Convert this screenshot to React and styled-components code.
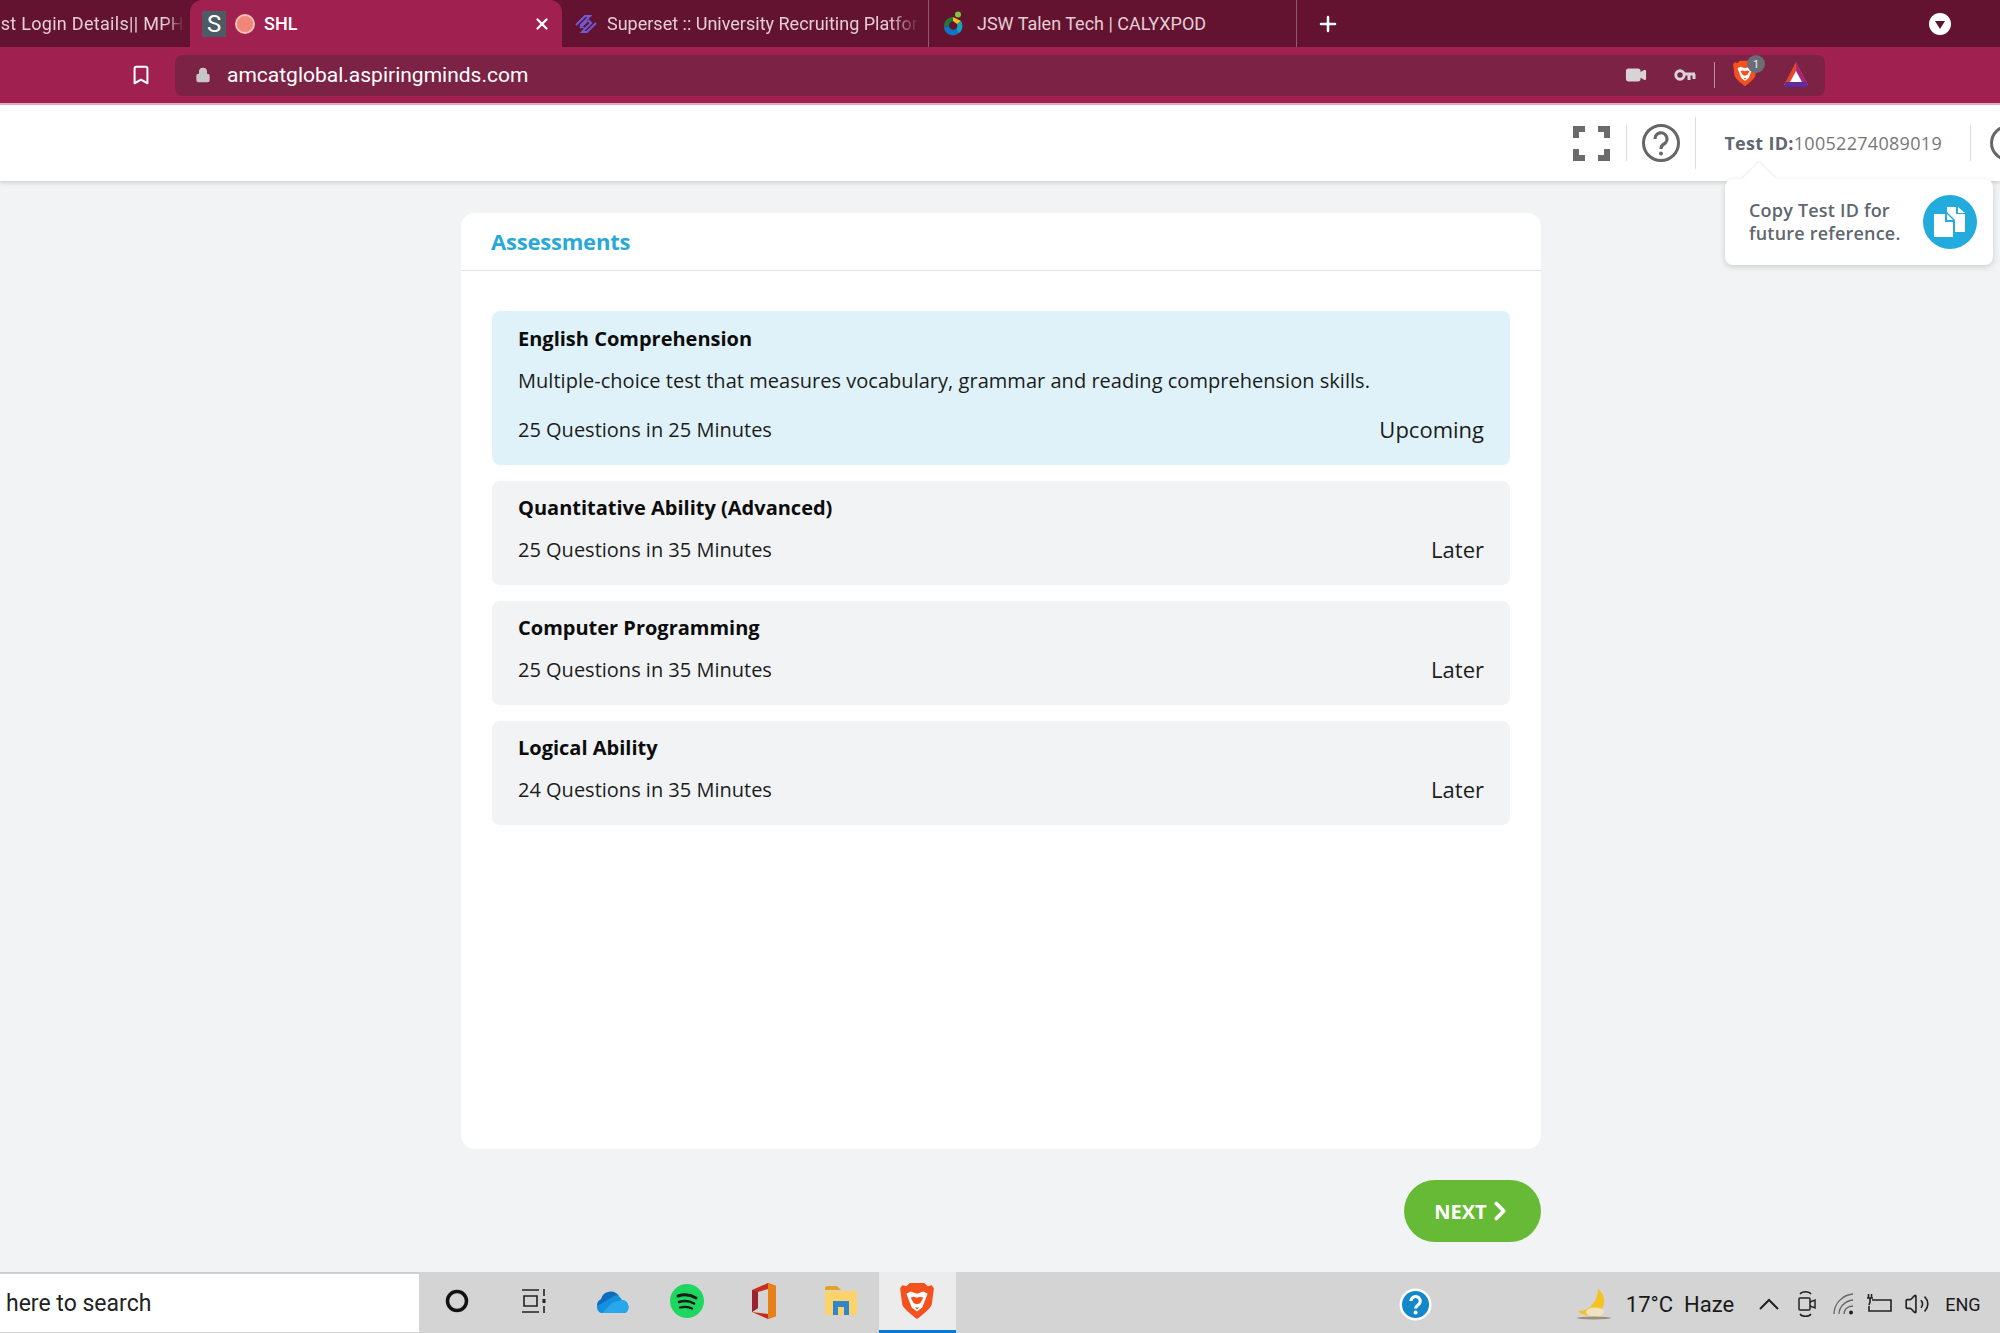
import React from 'react';
import styled, { createGlobalStyle } from 'styled-components';
import { Bookmark, Lock, Video, X, Plus, ChevronRight, Volume2 } from 'lucide-react';

const GlobalStyle = createGlobalStyle`
  html, body { margin: 0; padding: 0; background: #f1f3f5; }
  * { box-sizing: border-box; }
`;

const Page = styled.div`
  width: 2000px;
  height: 1333px;
  display: flex;
  flex-direction: column;
  overflow: hidden;
  font-family: "Open Sans", sans-serif;
  position: relative;
`;

/* browser chrome */
const TabStrip = styled.div`
  height: 47px;
  background: #63132f;
  display: flex;
  align-items: stretch;
  font-family: Roboto, "Liberation Sans", sans-serif;
  font-size: 18px;
`;

const Tab = styled.div`
  width: ${({ $w }) => $w}px;
  flex: none;
  display: flex;
  align-items: center;
  gap: ${({ $gap }) => $gap || 9}px;
  padding: 0 ${({ $right }) => $right || 0}px 0 ${({ $left }) => $left || 0}px;
  color: ${({ $active }) => ($active ? '#fff' : '#e3cdd6')};
  background: ${({ $active }) => ($active ? '#a0204f' : 'transparent')};
  border-radius: ${({ $active }) => ($active ? '12px 12px 0 0' : '0')};
  border-right: ${({ $divider }) => ($divider ? '1px solid #8e5a6e' : 'none')};
  overflow: hidden;
`;

const TabTitle = styled.span`
  flex: 1;
  white-space: nowrap;
  overflow: hidden;
  direction: ${({ $clipStart }) => ($clipStart ? 'rtl' : 'ltr')};
  letter-spacing: ${({ $clipStart }) => ($clipStart ? '0.3px' : '0')};
  font-weight: ${({ $active }) => ($active ? 500 : 400)};
  mask-image: ${({ $fade }) => ($fade ? 'linear-gradient(90deg, #000 90%, transparent)' : 'none')};
`;

const NewTab = styled.div`
  width: 62px;
  display: flex;
  align-items: center;
  justify-content: center;
  color: #fff;
`;

const StripEnd = styled.div`
  margin-left: auto;
  width: 71px;
  display: flex;
  align-items: center;
`;

const Toolbar = styled.div`
  height: 58px;
  background: #a0204f;
  border-bottom: 2px solid #e8a9c0;
  display: flex;
  align-items: center;
  padding: 0 175px 0 130px;
  color: #fff;
`;

const BookmarkSlot = styled.div`
  width: 45px;
  flex: none;
  display: flex;
`;

const Omnibox = styled.div`
  flex: 1;
  height: 41px;
  background: #7c2244;
  border-radius: 8px;
  display: flex;
  align-items: center;
  padding: 0 16px 0 20px;
  gap: 16px;
  font-family: Roboto, "Liberation Sans", sans-serif;
  font-size: 21px;
`;

const Url = styled.span`
  flex: 1;
`;

const OmniIcons = styled.div`
  display: flex;
  align-items: center;
  gap: 18px;
  color: #d8d3d5;
`;

const CameraIcon = styled(Video)`
  margin-right: 9px;
`;

const OmniDivider = styled.div`
  width: 1px;
  height: 26px;
  background: #b98ea0;
`;

const ShieldWrap = styled.div`
  position: relative;
  width: 32px;
  height: 30px;
`;

const ShieldBadge = styled.span`
  position: absolute;
  top: -5px;
  left: 14px;
  width: 18px;
  height: 18px;
  border-radius: 50%;
  background: #6c6c78;
  color: #eee;
  font-size: 11px;
  display: flex;
  align-items: center;
  justify-content: center;
`;

/* app header */
const AppHeader = styled.div`
  height: 76px;
  flex: none;
  background: #fff;
  box-shadow: 0 2px 4px rgba(0, 0, 0, 0.14);
  display: flex;
  align-items: center;
  justify-content: flex-end;
  color: #666;
  position: relative;
  z-index: 2;
`;

const HeaderCell = styled.div`
  height: ${({ $tall }) => ($tall ? 52 : 36)}px;
  display: flex;
  align-items: center;
  padding: 0 ${({ $pad }) => $pad || 0}px;
  border-left: ${({ $line }) => ($line ? '1px solid #ddd' : 'none')};
`;

const TestId = styled.div`
  font-size: 18px;
  letter-spacing: 0.3px;
  color: #777;
  white-space: nowrap;
  b { color: #5f6770; font-weight: 700; }
`;

const CutCircle = styled.div`
  width: 30px;
  height: 36px;
  border-left: 1px solid #ddd;
  overflow: hidden;
  padding-left: 19px;
  display: flex;
  align-items: center;
`;

const Ring = styled.div`
  width: 36px;
  height: 36px;
  flex: none;
  border-radius: 50%;
  border: 3px solid #666;
`;

const Tooltip = styled.div`
  position: absolute;
  top: 74px;
  left: 1725px;
  width: 268px;
  height: 86px;
  background: #fff;
  border-radius: 8px;
  box-shadow: 0 2px 6px rgba(0, 0, 0, 0.16);
  display: flex;
  align-items: center;
  justify-content: space-between;
  padding: 0 16px 0 24px;
  font-size: 18px;
  letter-spacing: 0.2px;
  line-height: 23px;
  font-weight: 600;
  color: #5f6770;
  &::before {
    content: '';
    position: absolute;
    top: -12px;
    left: 22px;
    width: 24px;
    height: 24px;
    background: #fff;
    transform: rotate(45deg);
    box-shadow: -1px -1px 2px rgba(0, 0, 0, 0.08);
  }
`;

const TooltipText = styled.div`
  position: relative;
  white-space: nowrap;
`;

const CopyButton = styled.div`
  width: 54px;
  height: 54px;
  border-radius: 50%;
  background: #22abdc;
  display: flex;
  align-items: center;
  justify-content: center;
`;

/* main content */
const Main = styled.div`
  flex: 1;
  background: #f1f3f5;
  display: flex;
  flex-direction: column;
  padding: 32px 459px 0 461px;
`;

const Card = styled.div`
  height: 936px;
  background: #fff;
  border-radius: 14px;
  display: flex;
  flex-direction: column;
`;

const CardHeader = styled.div`
  height: 58px;
  flex: none;
  border-bottom: 1px solid #dfe1e4;
  padding: 0 0 2px 30px;
  display: flex;
  align-items: center;
  font-size: 22px;
  font-weight: 700;
  letter-spacing: -0.2px;
  color: #28a9d6;
`;

const CardList = styled.div`
  padding: 40px 31px;
  display: flex;
  flex-direction: column;
  gap: 16px;
`;

const Row = styled.div`
  background: ${({ $current }) => ($current ? '#dff2f9' : '#f1f3f5')};
  border-radius: 8px;
  height: ${({ $current }) => ($current ? 154 : 104)}px;
  padding: ${({ $current }) => ($current ? 14 : 13)}px 26px 0;
  color: #1c1c1c;
`;

const RowTitle = styled.div`
  font-size: 20px;
  line-height: 27px;
  font-weight: 700;
  color: #0c0c0c;
`;

const RowDesc = styled.div`
  font-size: 20px;
  letter-spacing: 0.03px;
  line-height: 27px;
  margin-top: 15px;
`;

const RowFoot = styled.div`
  display: flex;
  align-items: center;
  justify-content: space-between;
  margin-top: ${({ $current }) => ($current ? 22 : 15)}px;
  font-size: 20px;
  line-height: 27px;
`;

const Status = styled.span`
  font-size: 22px;
`;

const Footer = styled.div`
  display: flex;
  justify-content: flex-end;
  margin-top: 31px;
`;

const NextButton = styled.button`
  width: 137px;
  height: 62px;
  border: none;
  border-radius: 31px;
  background: #67ba35;
  color: #fff;
  font-family: inherit;
  font-size: 20px;
  font-weight: 700;
  display: flex;
  align-items: center;
  justify-content: center;
  padding-left: 10px;
  svg { margin-left: -2px; }
`;

/* windows taskbar */
const Taskbar = styled.div`
  height: 61px;
  flex: none;
  background: #d4d4d4;
  display: flex;
  align-items: stretch;
  font-family: Roboto, "Liberation Sans", sans-serif;
  color: #1a1a1a;
`;

const SearchBox = styled.div`
  width: 419px;
  flex: none;
  background: #fff;
  border-top: 2px solid #cfcfcf;
  border-bottom: 1px solid #cfcfcf;
  display: flex;
  align-items: center;
  padding-left: 6px;
  font-size: 23px;
  color: #222;
`;

const Slot = styled.div`
  width: 76.7px;
  flex: none;
  display: flex;
  align-items: center;
  justify-content: center;
  background: ${({ $active }) => ($active ? '#ececec' : 'transparent')};
  border-bottom: 3px solid ${({ $active }) => ($active ? '#0a78d4' : 'transparent')};
`;

const Tray = styled.div`
  flex: 1;
  display: flex;
  align-items: center;
  padding-top: 3px;
`;

const TrayItem = styled.div`
  margin-left: ${({ $gap }) => $gap || 0}px;
  flex: none;
  display: flex;
  align-items: center;
  font-size: ${({ $size }) => $size || 22}px;
`;

const SFavicon = styled.div`
  width: 24px;
  height: 26px;
  flex: none;
  background: #4d5c64;
  color: #fff;
  font-size: 24px;
  line-height: 26px;
  text-align: center;
`;

const RecordDot = styled.div`
  width: 20px;
  height: 20px;
  flex: none;
  border-radius: 50%;
  background: #f0857a;
  border: 2px solid #f6c0b8;
`;

const BraveIcon = ({ size = 34 }) => (
  <svg width={size} height={size * 1.12} viewBox="0 0 32 36">
    <path d="M9 1h14l3 3 4-1 2 3-2 15c-1 4-10 11-14 14C12 32 3 25 2 21L0 6l2-3 4 1z" fill="#f4511e" />
    <path d="M10 9l6 2 6-2 4 2-3 8-2 5-5 4-5-4-2-5-3-8z" fill="#fff" />
    <path d="M13 14l-3 1 3 5 3 1 3-1 3-5-3-1-3 1zM14 24h4l-2 2z" fill="#f4511e" />
  </svg>
);

const PeakIcon = () => (
  <svg width="26" height="28" viewBox="0 0 26 28">
    <path d="M13 1L1 24h24z" fill="#e8452c" />
    <path d="M13 1l12 23H14z" fill="#a3267e" />
    <path d="M13 10l6 11H7z" fill="#fff" />
    <path d="M1 26l2-5h20l2 5z" fill="#5a2ca0" />
  </svg>
);

const SupersetIcon = () => (
  <svg width="24" height="20" viewBox="0 0 24 20" fill="none" stroke="#6f5ad8" strokeWidth="2">
    <path d="M2 11l9-9h5l-9 9 3 3M22 9l-9 9H8l9-9-3-3M6 14l7-7" />
  </svg>
);

const CalyxIcon = () => (
  <svg width="24" height="26" viewBox="0 0 24 26">
    <path d="M12 6a9 9 0 0 0-9 10l5-1a4.500 4.500 0 0 1 4-5z" fill="#1f7a3e" />
    <path d="M3 16a9 9 0 0 0 15 6l-3-4a4.500 4.500 0 0 1-7-3z" fill="#1273c4" />
    <path d="M18 22a9 9 0 0 0 2-12l-4 3a4.500 4.500 0 0 1-1 5z" fill="#12a3c4" />
    <path d="M12 6l8 4-4 3-4-3z" fill="#f4c21a" />
    <circle cx="17" cy="3.500" r="3" fill="#7ac943" />
  </svg>
);

const ChevronDisc = () => (
  <svg width="22" height="22" viewBox="0 0 22 22">
    <circle cx="11" cy="11" r="11" fill="#fff" />
    <path d="M6 8h10l-5 8z" fill="#63132f" />
  </svg>
);

const KeyIcon = () => (
  <svg width="22" height="14" viewBox="0 0 22 14" fill="none" stroke="#d8d3d5">
    <circle cx="6" cy="7" r="4.200" strokeWidth="3" />
    <path d="M10 6h11M15 6v6M20 6v5" strokeWidth="3" />
  </svg>
);

const ExpandIcon = () => (
  <svg width="37" height="35" viewBox="0 0 37 35" fill="none" stroke="#6b6b6b" strokeWidth="6">
    <path d="M3 12V3h9M25 3h9v9M34 23v9h-9M12 32H3v-9" />
  </svg>
);

const HelpIcon = () => (
  <svg width="38" height="38" viewBox="0 0 38 38" fill="none" stroke="#666">
    <circle cx="19" cy="19" r="17.500" strokeWidth="3" />
    <path d="M13 15a6 6 0 1 1 9 5c-2 1-3 2-3 5" strokeWidth="3.200" />
    <circle cx="19" cy="29.500" r="2" fill="#666" stroke="none" />
  </svg>
);

const CopyIcon = () => (
  <svg width="32" height="30" viewBox="0 0 32 30" fill="#fff">
    <path d="M0 7h11v8h8v15H0z" />
    <path d="M13 7l6 6h-6z" />
    <path d="M13 0h9v7h9v18H21V13l-8-8z" />
    <path d="M24 0l7 6h-7z" />
  </svg>
);

const CircleTask = () => (
  <svg width="24" height="24" viewBox="0 0 24 24" fill="none" stroke="#111" strokeWidth="3.500">
    <circle cx="12" cy="12" r="9.500" />
  </svg>
);

const TaskViewIcon = () => (
  <svg width="26" height="26" viewBox="0 0 26 26" fill="none" stroke="#222" strokeWidth="1.600">
    <path d="M1 2h17M1 24h17M3 8h13v10H3zM23 1v7M23 18v7" />
    <rect x="21.500" y="11" width="3" height="4" fill="#222" stroke="none" />
  </svg>
);

const OneDriveIcon = () => (
  <svg width="38" height="24" viewBox="0 0 38 24">
    <path d="M9 10a10 10 0 0 1 18-3l-8 10-14 1a8 8 0 0 1 4-8z" fill="#0f6cbd" />
    <path d="M24 6a9 9 0 0 1 6 5 7 7 0 0 1 3 13H9a6 6 0 0 1-4-7z" fill="#1490df" />
    <path d="M20 14l10-3a7 7 0 0 1 3 13H10z" fill="#28a8ea" />
  </svg>
);

const SpotifyIcon = () => (
  <svg width="34" height="34" viewBox="0 0 34 34" fill="none" stroke="#1a1a1a" strokeLinecap="round">
    <circle cx="17" cy="17" r="17" fill="#1ed760" stroke="none" />
    <path d="M8 12c6-2 13-1 18 2" strokeWidth="3" />
    <path d="M9 18c5-1.500 11-1 15 1.500" strokeWidth="2.600" />
    <path d="M10 23.500c4-1 9-.8 12 1" strokeWidth="2.200" />
  </svg>
);

const OfficeIcon = () => (
  <svg width="26" height="38" viewBox="0 0 26 38">
    <path d="M1 8L17 1l8 3v30l-8 3-16-7 16 2V7L7 10v16l-6 4z" fill="#c4301c" />
    <path d="M17 1l8 3v30l-8 3z" fill="#e8801a" />
    <path d="M1 8l6 2v16l-6 4z" fill="#9a2230" />
  </svg>
);

const FolderIcon = () => (
  <svg width="34" height="32" viewBox="0 0 34 32">
    <path d="M1 3a2 2 0 0 1 2-2h10l4 4H1z" fill="#e0a526" />
    <path d="M1 6h32v24H1z" fill="#fcd36a" />
    <path d="M9 16h16v14h-5v-8h-6v8H9z" fill="#2f86c9" />
  </svg>
);

const HelpBadge = () => (
  <svg width="33" height="33" viewBox="0 0 33 33">
    <circle cx="16.500" cy="16.500" r="16" fill="#fff" />
    <circle cx="16.500" cy="16.500" r="13.500" fill="#1287c9" />
    <path d="M12 13a4.600 4.600 0 1 1 7 4c-1.500 1-2.400 1.600-2.400 3.500" fill="none" stroke="#fff" strokeWidth="3" />
    <circle cx="16.600" cy="24.500" r="2" fill="#fff" />
  </svg>
);

const MoonIcon = () => (
  <svg width="36" height="32" viewBox="0 0 36 32">
    <path d="M22 1c7 5 8 15 3 21-3 4-8 6-14 5-4 0-7-2-9-4 9 1 20-8 20-22z" fill="#f6c221" />
    <ellipse cx="19" cy="24" rx="9" ry="4.500" fill="#efe2c2" />
    <ellipse cx="18" cy="30" rx="17" ry="1.500" fill="#9c9078" />
  </svg>
);

const MeetIcon = () => (
  <svg width="20" height="30" viewBox="0 0 20 30" fill="none" stroke="#222" strokeWidth="1.500">
    <path d="M3 5c2-3 9-3 11 0M3 25c2 3 9 3 11 0" />
    <rect x="2" y="9" width="11" height="12" rx="1" />
    <path d="M13 13l5-2v8l-5-2" />
  </svg>
);

const SignalIcon = () => (
  <svg width="22" height="22" viewBox="0 0 22 22" fill="none" stroke="#666" strokeWidth="1.300">
    <path d="M1 21C1 11 9 2 20 1M6 21c0-7 6-13 14-14M11 21c0-4 3-8 9-8" />
    <circle cx="18" cy="19.500" r="2" fill="#222" stroke="none" />
  </svg>
);

const BatteryIcon = () => (
  <svg width="26" height="22" viewBox="0 0 26 22" fill="none" stroke="#222" strokeWidth="1.600">
    <path d="M6 7h19v11H3v-5M1 5h6M2.500 1v4M5.500 1v4M4 5v4l-1 3" />
  </svg>
);

const tasks = [
  { title: 'English Comprehension', desc: 'Multiple-choice test that measures vocabulary, grammar and reading comprehension skills.', meta: '25 Questions in 25 Minutes', status: 'Upcoming', current: true },
  { title: 'Quantitative Ability (Advanced)', meta: '25 Questions in 35 Minutes', status: 'Later' },
  { title: 'Computer Programming', meta: '25 Questions in 35 Minutes', status: 'Later' },
  { title: 'Logical Ability', meta: '24 Questions in 35 Minutes', status: 'Later' },
];

export default function App() {
  return (
    <Page>
      <GlobalStyle />
      <TabStrip>
        <Tab $w={190} $right={6}>
          <TabTitle $clipStart $fade>st Login Details|| MPH</TabTitle>
        </Tab>
        <Tab $w={372} $active $left={12} $right={11}>
          <SFavicon>S</SFavicon>
          <RecordDot />
          <TabTitle $active>SHL</TabTitle>
          <X size={18} strokeWidth={3} />
        </Tab>
        <Tab $w={367} $left={12} $right={8} $divider>
          <SupersetIcon />
          <TabTitle $fade>Superset :: University Recruiting Platform</TabTitle>
        </Tab>
        <Tab $w={368} $left={12} $gap={12} $divider>
          <CalyxIcon />
          <TabTitle>JSW Talen Tech | CALYXPOD</TabTitle>
        </Tab>
        <NewTab><Plus size={24} strokeWidth={2.500} /></NewTab>
        <StripEnd><ChevronDisc /></StripEnd>
      </TabStrip>

      <Toolbar>
        <BookmarkSlot><Bookmark size={22} strokeWidth={2.200} /></BookmarkSlot>
        <Omnibox>
          <Lock size={16} fill="#c9c5c7" color="#c9c5c7" />
          <Url>amcatglobal.aspiringminds.com</Url>
          <OmniIcons>
            <CameraIcon size={22} fill="#d8d3d5" />
            <KeyIcon />
            <OmniDivider />
            <ShieldWrap>
              <BraveIcon size={24} />
              <ShieldBadge>1</ShieldBadge>
            </ShieldWrap>
            <PeakIcon />
          </OmniIcons>
        </Omnibox>
      </Toolbar>

      <AppHeader>
        <HeaderCell $pad={16}><ExpandIcon /></HeaderCell>
        <HeaderCell $line $pad={15}><HelpIcon /></HeaderCell>
        <HeaderCell $line $tall $pad={28}>
          <TestId><b>Test ID:</b>10052274089019</TestId>
        </HeaderCell>
        <CutCircle><Ring /></CutCircle>
        <Tooltip>
          <TooltipText>Copy Test ID for<br />future reference.</TooltipText>
          <CopyButton><CopyIcon /></CopyButton>
        </Tooltip>
      </AppHeader>

      <Main>
        <Card>
          <CardHeader>Assessments</CardHeader>
          <CardList>
            {tasks.map((t) => (
              <Row key={t.title} $current={t.current}>
                <RowTitle>{t.title}</RowTitle>
                {t.desc && <RowDesc>{t.desc}</RowDesc>}
                <RowFoot $current={t.current}>
                  <span>{t.meta}</span>
                  <Status>{t.status}</Status>
                </RowFoot>
              </Row>
            ))}
          </CardList>
        </Card>
        <Footer>
          <NextButton>NEXT<ChevronRight size={30} strokeWidth={3} /></NextButton>
        </Footer>
      </Main>

      <Taskbar>
        <SearchBox>here to search</SearchBox>
        <Slot><CircleTask /></Slot>
        <Slot><TaskViewIcon /></Slot>
        <Slot><OneDriveIcon /></Slot>
        <Slot><SpotifyIcon /></Slot>
        <Slot><OfficeIcon /></Slot>
        <Slot><FolderIcon /></Slot>
        <Slot $active><BraveIcon /></Slot>
        <Tray>
          <TrayItem $gap={443}><HelpBadge /></TrayItem>
          <TrayItem $gap={144}><MoonIcon /></TrayItem>
          <TrayItem $gap={14}>17°C</TrayItem>
          <TrayItem $gap={11}>Haze</TrayItem>
          <TrayItem $gap={25}>
            <svg width="20" height="12" viewBox="0 0 20 12" fill="none" stroke="#222" strokeWidth="2"><path d="M1 11l9-9 9 9" /></svg>
          </TrayItem>
          <TrayItem $gap={18}><MeetIcon /></TrayItem>
          <TrayItem $gap={16}><SignalIcon /></TrayItem>
          <TrayItem $gap={11}><BatteryIcon /></TrayItem>
          <TrayItem $gap={12}><Volume2 size={26} color="#222" strokeWidth={1.500} /></TrayItem>
          <TrayItem $gap={15} $size={18}>ENG</TrayItem>
        </Tray>
      </Taskbar>
    </Page>
  );
}
